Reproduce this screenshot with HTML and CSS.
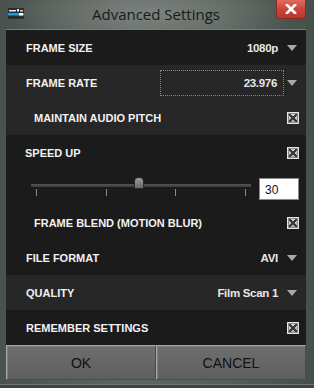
FILE: index.html
```html
<!DOCTYPE html>
<html lang="en">
<head>
    <meta charset="UTF-8">
    <meta name="viewport" content="width=device-width, initial-scale=1.0">
    <title>Advanced Settings</title>
    <link rel="stylesheet" href="styles.css">
</head>
<body>
    <div class="window">
        <div class="titlebar">
            <svg class="app-icon" width="16" height="11" viewBox="0 0 16 11">
                <rect width="16" height="11" fill="#2b2d30"/>
                <rect x="1" y="2" width="7" height="1.5" fill="#e8e8e8"/>
                <rect x="9" y="1" width="2" height="2.5" fill="#e8e8e8"/>
                <rect x="12" y="2" width="3" height="1.5" fill="#d0d0d0"/>
                <rect x="0" y="5" width="16" height="2.5" fill="#1d9be0"/>
                <rect x="11" y="5" width="4" height="2.5" fill="#ffffff"/>
            </svg>
            <span class="title">Advanced Settings</span>
            <div class="close-btn">
                <svg width="12" height="10" viewBox="0 0 12 10">
                    <path d="M2 1 L10 9 M10 1 L2 9" stroke="#fff" stroke-width="2.6" stroke-linecap="square"/>
                </svg>
            </div>
        </div>

        <div class="panel">
            <div class="row">
                <span class="label">FRAME SIZE</span>
                <span class="select"><span class="value">1080p</span><span class="arrow"></span></span>
            </div>

            <div class="group light">
                <div class="row">
                    <span class="label">FRAME RATE</span>
                    <span class="select"><span class="value focused">23.976</span><span class="arrow"></span></span>
                </div>
                <div class="row sub">
                    <span class="label">MAINTAIN AUDIO PITCH</span>
                    <span class="check"></span>
                </div>
            </div>

            <div class="row speed">
                <span class="label">SPEED UP</span>
                <span class="check"></span>
            </div>
            <div class="row slider-row">
                <div class="slider">
                    <div class="track"></div>
                    <div class="ticks">
                        <span></span><span></span><span></span><span></span>
                    </div>
                    <div class="thumb"></div>
                </div>
                <input class="speed-input" type="text" value="30">
            </div>
            <div class="row sub">
                <span class="label">FRAME BLEND (MOTION BLUR)</span>
                <span class="check"></span>
            </div>

            <div class="row">
                <span class="label">FILE FORMAT</span>
                <span class="select"><span class="value">AVI</span><span class="arrow"></span></span>
            </div>
            <div class="row light">
                <span class="label">QUALITY</span>
                <span class="select"><span class="value">Film Scan 1</span><span class="arrow"></span></span>
            </div>
            <div class="row">
                <span class="label">REMEMBER SETTINGS</span>
                <span class="check"></span>
            </div>

            <div class="buttons">
                <button class="btn">OK</button>
                <button class="btn">CANCEL</button>
            </div>
        </div>
    </div>
</body>
</html>
```
FILE: styles.css
```css
/* Advanced settings dialog */
* {
    box-sizing: border-box;
}

body {
    margin: 0;
    background: #4f5752;
}

.window {
    width: 314px;
    height: 388px;
    padding: 0 8px 8px 6px;
    display: flex;
    flex-direction: column;
    background:
        radial-gradient(ellipse 140px 40px at 150px 14px, #7c827d 0%, rgba(124, 130, 125, 0) 100%),
        linear-gradient(90deg, #4a524d 0%, #5e6661 40%, #56605a 70%, #45504a 100%);
    box-shadow: inset 0 -3px 0 #3d4440, inset 0 -4px 0 #6d7570;
}

.titlebar {
    height: 29px;
    display: flex;
    align-items: center;
    position: relative;
}

.app-icon {
    position: absolute;
    left: 2px;
    top: 8px;
}

.title {
    flex: 1;
    text-align: center;
    font-family: "Open Sans", "Noto Sans", sans-serif;
    font-size: 15px;
    color: #1a1a1a;
    margin-top: -1px;
}

.close-btn {
    position: absolute;
    right: 0;
    top: 0;
    width: 30px;
    height: 19px;
    display: flex;
    align-items: center;
    justify-content: center;
    background: linear-gradient(#e26a5e, #c8473a 50%, #b9382c);
    border: 1px solid #8a2a22;
    border-top: none;
    border-radius: 0 0 4px 4px;
}

.panel {
    flex: 1;
    border-top: 1px solid #7a7d7a;
    background: #1b1b1b;
    display: flex;
    flex-direction: column;
}

.row {
    height: 35px;
    display: flex;
    align-items: center;
    justify-content: space-between;
    padding: 0 7px 0 20px;
    font-family: "Liberation Sans", Arial, sans-serif;
    color: #f2f2f2;
}

.light {
    background: #272727;
}

.row.sub {
    padding-left: 28px;
}

.row.speed {
    padding-left: 19px;
}

.label {
    font-size: 11px;
    font-weight: bold;
}

.select {
    display: flex;
    align-items: center;
}

.value {
    font-size: 11.5px;
    font-weight: bold;
    letter-spacing: -0.3px;
    opacity: 0.95;
}

.value.focused {
    width: 124px;
    height: 26px;
    line-height: 24px;
    text-align: right;
    padding-right: 6px;
    margin-right: -6px;
    border: 1px dotted #8a8a8a;
}

.arrow {
    width: 0;
    height: 0;
    margin-left: 9px;
    margin-right: 2px;
    border-left: 5px solid transparent;
    border-right: 5px solid transparent;
    border-top: 6px solid #a9a9a9;
}

.check {
    width: 12px;
    height: 12px;
    background:
        linear-gradient(45deg, transparent 44%, #3a3a3a 44%, #3a3a3a 56%, transparent 56%),
        linear-gradient(-45deg, transparent 44%, #3a3a3a 44%, #3a3a3a 56%, transparent 56%),
        linear-gradient(#dcdcdc, #a6a6a6);
    border: 1px solid #e6e6e6;
    box-shadow: inset 0 0 0 1px #8a8a8a;
}

.slider-row {
    padding: 0 7px 0 25px;
}

.slider {
    position: relative;
    width: 220px;
    height: 35px;
}

.track {
    position: absolute;
    left: 0;
    right: 0;
    top: 14px;
    height: 3px;
    background: linear-gradient(#555, #3a3a3a);
}

.ticks {
    position: absolute;
    left: 5px;
    right: 5px;
    top: 19px;
    display: flex;
    justify-content: space-between;
}

.ticks span {
    width: 1px;
    height: 7px;
    background: #8c8c8c;
}

.thumb {
    position: absolute;
    left: 103px;
    top: 7px;
    width: 10px;
    height: 12px;
    background: linear-gradient(#9a9a9a, #6a6a6a);
    border: 1px solid #2a2a2a;
    border-radius: 4px 4px 1px 1px;
}

.speed-input {
    width: 40px;
    height: 22px;
    margin-top: 2px;
    padding: 2px 5px 0;
    font-family: "Liberation Sans", Arial, sans-serif;
    font-size: 12px;
    color: #111;
    background: #fff;
    border: 1px solid #8a8a8a;
    outline: none;
}

.buttons {
    height: 35px;
    display: grid;
    grid-template-columns: 150px 150px;
}

.btn {
    font-family: "Liberation Sans", Arial, sans-serif;
    font-size: 14px;
    color: #111;
    background: linear-gradient(#6e6e6e, #5f5f5f);
    border: 1px solid #4a4a4a;
    border-top-color: #a6a6a6;
    border-left-color: #a6a6a6;
    box-shadow: inset 1px 1px 0 #7e7e7e;
    padding: 0;
}
```
